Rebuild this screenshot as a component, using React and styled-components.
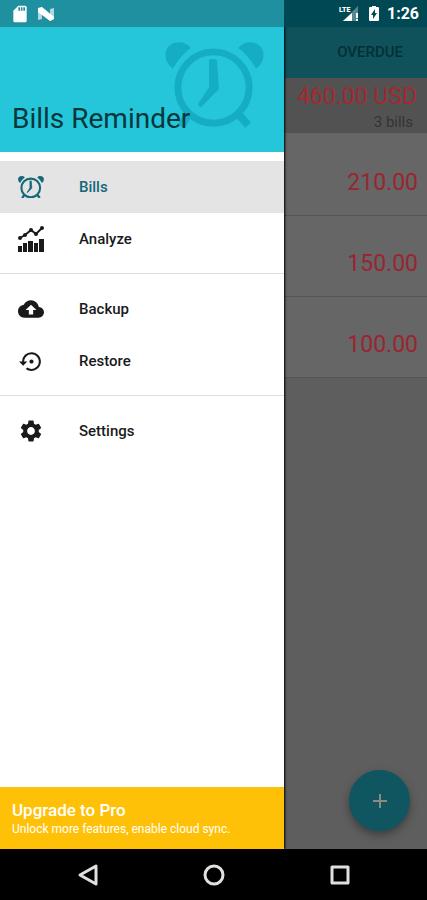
import React, { useState } from "react";

import styled, { createGlobalStyle } from "styled-components";
import {
  MdAdd,
  MdCloudUpload,
  MdSdCard,
  MdSettings,
  MdSettingsBackupRestore,
} from "react-icons/md";

const GlobalStyle = createGlobalStyle`
  * {
    box-sizing: border-box;
  }

  body {
    margin: 0;
    background: #000;
    font-family: Roboto, "Liberation Sans", sans-serif;
  }

  button {
    border: none;
    padding: 0;
    background: none;
    font-family: inherit;
    cursor: pointer;
  }
`;

const AlarmClock = ({ size, stroke = 7 }) => (
  <svg width={size} height={size * 0.88} viewBox="0 0 100 88" aria-hidden="true">
    <path d="M8 27A17 17 0 0 1 1 9C4 -1 19 -3 26 6Q15 14 8 27Z" fill="currentColor" />
    <path d="M92 27A17 17 0 0 0 99 9C96 -1 81 -3 74 6Q85 14 92 27Z" fill="currentColor" />
    <g fill="none" stroke="currentColor" strokeWidth={stroke}>
      <circle cx="49" cy="46" r="36" />
      <path d="M24 73L16 85M74 73L84 84" strokeWidth={stroke + 1} />
    </g>
    <path
      d="M46 19H51L53 47L36 64L35 63L46 46Z"
      fill="currentColor"
      stroke="currentColor"
      strokeWidth="3"
      strokeLinejoin="round"
    />
  </svg>
);

const AnalyzeIcon = () => (
  <svg width="28" height="28" viewBox="0 0 28 28" aria-hidden="true">
    <g fill="currentColor">
      <path d="M1 21h4v6H1zM6 18h4v9H6zM11 16h5v11h-5zM17 18h4v9h-4zM22 14h5v13h-5z" />
      <circle cx="3" cy="13" r="2" />
      <circle cx="8" cy="10" r="2" />
      <circle cx="14" cy="5" r="2" />
      <circle cx="19" cy="9" r="2" />
      <circle cx="25" cy="3" r="2" />
    </g>
    <path d="M3 13L8 10L14 5L19 9L25 3" fill="none" stroke="currentColor" strokeWidth="2" />
  </svg>
);

const NougatIcon = () => (
  <svg width="18" height="14" viewBox="0 0 18 14" aria-hidden="true">
    <path d="M1 2L5 0V12L1 13ZM13 2L17 1V12L13 14Z" fill="#fff" opacity="0.65" />
    <path d="M1 1L5 0L17 10V12L13 14L1 5Z" fill="#fff" />
  </svg>
);

const SignalIcon = () => (
  <svg width="22" height="17" viewBox="0 0 22 17" aria-label="LTE signal">
    <path d="M4 16L19 1V16Z" fill="#fff" opacity="0.35" />
    <path d="M4 16L13 8V16Z" fill="#fff" />
    <path d="M17 8h2v5h-2zM17 14h2v2h-2z" fill="#fff" />
    <text x="0" y="7" fontSize="7" fontWeight="900" fill="#fff">
      LTE
    </text>
  </svg>
);

const BatteryIcon = () => (
  <svg width="12" height="17" viewBox="0 0 12 17" aria-label="Charging">
    <path
      d="M4 1H8V2H10Q11 2 11 3V15Q11 16 10 16H2Q1 16 1 15V3Q1 2 2 2H4ZM7 4L3 10H5V14L9 8H7Z"
      fill="#fff"
      fillRule="evenodd"
    />
  </svg>
);

const menuGroups = [
  [
    { name: "Bills", icon: <AlarmClock size={26} stroke={8} /> },
    { name: "Analyze", icon: <AnalyzeIcon /> },
  ],
  [
    { name: "Backup", icon: <MdCloudUpload size={26} /> },
    { name: "Restore", icon: <MdSettingsBackupRestore size={25} /> },
  ],
  [{ name: "Settings", icon: <MdSettings size={26} /> }],
];

const bills = ["210.00", "150.00", "100.00"];

const App = () => {
  const [selected, setSelected] = useState("Bills");

  return (
    <Screen>
      <GlobalStyle />
      <Stage>
        <TabBar>
          <Tab type="button">OVERDUE</Tab>
        </TabBar>
        <Summary>
          <Total>460.00 USD</Total>
          <Count>3 bills</Count>
        </Summary>
        <BillList>
          {bills.map((amount) => (
            <BillRow key={amount}>{amount}</BillRow>
          ))}
        </BillList>
        <AddButton type="button" aria-label="Add bill">
          <MdAdd size={24} />
        </AddButton>

        <Drawer>
          <DrawerHeader>
            <HeaderArt>
              <AlarmClock size={99} />
            </HeaderArt>
            <Title>Bills Reminder</Title>
          </DrawerHeader>
          <Menu>
            {menuGroups.map((group) => (
              <MenuGroup key={group[0].name}>
                {group.map(({ name, icon }) => (
                  <MenuItem
                    key={name}
                    type="button"
                    $active={name === selected}
                    onClick={() => setSelected(name)}
                  >
                    <MenuIcon>{icon}</MenuIcon>
                    {name}
                  </MenuItem>
                ))}
              </MenuGroup>
            ))}
          </Menu>
          <Upgrade type="button">
            <UpgradeTitle>Upgrade to Pro</UpgradeTitle>
            <UpgradeText>Unlock more features, enable cloud sync.</UpgradeText>
          </Upgrade>
        </Drawer>

        <StatusBar>
          <StatusGroup>
            <MdSdCard size={20} />
            <NougatIcon />
          </StatusGroup>
          <StatusGroup>
            <SignalIcon />
            <BatteryIcon />
            <Clock>1:26</Clock>
          </StatusGroup>
        </StatusBar>
      </Stage>

      <NavBar>
        <NavButton type="button" aria-label="Back">
          <svg width="24" height="24" viewBox="0 0 24 24">
            <path d="M20 3V21L4 12Z" />
          </svg>
        </NavButton>
        <NavButton type="button" aria-label="Home">
          <svg width="24" height="24" viewBox="0 0 24 24">
            <circle cx="12" cy="12" r="9" />
          </svg>
        </NavButton>
        <NavButton type="button" aria-label="Recent apps">
          <svg width="24" height="24" viewBox="0 0 24 24">
            <rect x="4" y="4" width="16" height="16" />
          </svg>
        </NavButton>
      </NavBar>
    </Screen>
  );
};

const Screen = styled.div`
  display: flex;
  flex-direction: column;
  min-height: 100vh;
`;

const Stage = styled.main`
  position: relative;
  flex: 1;
  display: flex;
  flex-direction: column;
  padding-top: 26px;
  background: #5e5e5e;
`;

const StatusBar = styled.div`
  position: absolute;
  top: 0;
  left: 0;
  right: 0;
  height: 27px;
  display: flex;
  align-items: center;
  justify-content: space-between;
  padding: 0 8px 0 10px;
  background: linear-gradient(
    to right,
    #1f909f calc(100% - 143px),
    #004853 calc(100% - 143px)
  );
  color: #fff;
`;

const StatusGroup = styled.div`
  display: flex;
  align-items: center;
  gap: 7px;
`;

const Clock = styled.span`
  font-size: 16px;
  font-weight: 700;
`;

const TabBar = styled.nav`
  display: flex;
  justify-content: flex-end;
  height: 52px;
  padding-right: 24px;
  background: #0f525b;
`;

const Tab = styled.button`
  color: #052f35;
  font-size: 15px;
  font-weight: 500;
`;

const Summary = styled.header`
  display: flex;
  flex-direction: column;
  align-items: flex-end;
  height: 55px;
  padding: 5px 10px 0 0;
  background: #525252;
`;

const Total = styled.span`
  color: #a3282f;
  font-size: 23px;
  line-height: 28px;
`;

const Count = styled.span`
  padding-right: 4px;
  color: #343434;
  font-size: 15px;
  line-height: 22px;
`;

const BillList = styled.ul`
  margin: 0;
  padding: 2px 0 0;
  background: #666;
  list-style: none;
`;

const BillRow = styled.li`
  display: flex;
  align-items: center;
  justify-content: flex-end;
  height: 81px;
  padding: 14px 9px 0 0;
  border-bottom: 1px solid #545454;
  color: #9a2530;
  font-size: 23px;
`;

const AddButton = styled.button`
  position: absolute;
  right: 17px;
  bottom: 18px;
  display: flex;
  align-items: center;
  justify-content: center;
  width: 61px;
  height: 61px;
  border-radius: 50%;
  background: #0f5660;
  box-shadow: 0 4px 8px rgba(0, 0, 0, 0.35);
  color: #8a8a80;
`;

const Drawer = styled.aside`
  position: absolute;
  top: 0;
  bottom: 0;
  left: 0;
  display: flex;
  flex-direction: column;
  width: calc(100% - 143px);
  background: #fff;
  box-shadow: 1px 0 2px #000;
`;

const DrawerHeader = styled.header`
  position: relative;
  display: flex;
  align-items: flex-end;
  height: 152px;
  padding: 0 12px 16px;
  background: #26c6da;
`;

const HeaderArt = styled.div`
  position: absolute;
  top: 42px;
  right: 20px;
  color: #15adc3;
`;

const Title = styled.h1`
  position: relative;
  margin: 0;
  color: #05373d;
  font-size: 28px;
  font-weight: 400;
  line-height: 34px;
`;

const Menu = styled.nav`
  flex: 1;
`;

const MenuGroup = styled.div`
  padding: 9px 0 8px;

  & + & {
    border-top: 1px solid #dedede;
  }
`;

const MenuItem = styled.button`
  display: flex;
  align-items: center;
  width: 100%;
  height: 52px;
  padding-left: 17px;
  background: ${({ $active }) => ($active ? "#e4e4e4" : "transparent")};
  color: ${({ $active }) => ($active ? "#14687a" : "#1a1a1a")};
  font-size: 15px;
  font-weight: 500;
  text-align: left;
`;

const MenuIcon = styled.span`
  display: flex;
  justify-content: center;
  width: 28px;
  margin-right: 34px;
`;

const Upgrade = styled.button`
  display: flex;
  flex-direction: column;
  justify-content: center;
  align-items: flex-start;
  height: 62px;
  padding: 2px 12px 0;
  background: #ffc107;
  color: #fff;
`;

const UpgradeTitle = styled.span`
  font-size: 17px;
  font-weight: 500;
  line-height: 20px;
`;

const UpgradeText = styled.span`
  font-size: 12px;
  line-height: 18px;
`;

const NavBar = styled.footer`
  display: flex;
  align-items: center;
  justify-content: center;
  gap: 102px;
  height: 51px;
  background: #000;
`;

const NavButton = styled.button`
  display: flex;

  svg {
    fill: none;
    stroke: #e0e0e0;
    stroke-width: 3;
    stroke-linejoin: round;
  }
`;

export default App;
